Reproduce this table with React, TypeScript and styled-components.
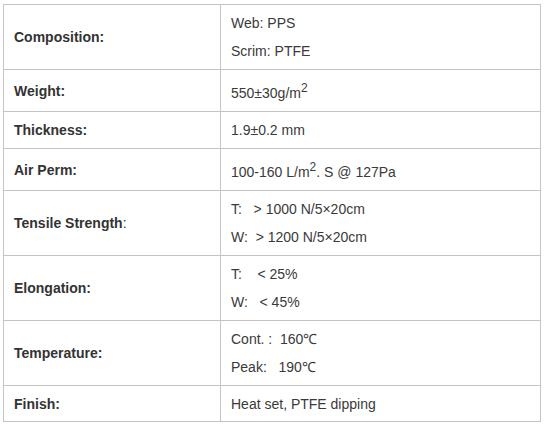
import React from "react";
import styled, { createGlobalStyle } from "styled-components";

const Global = createGlobalStyle`
  html, body { margin: 0; padding: 0; background: #fff; }
  body { font-family: "Liberation Sans", Arial, sans-serif; }
`;

const Wrap = styled.div`
  padding: 4px 4px 0 3px;
`;

const Table = styled.table`
  width: 538px;
  border-collapse: collapse;
  table-layout: fixed;
  font-family: "Liberation Sans", Arial, sans-serif;
  font-size: 14px;
  line-height: 20px;
  color: #333;
`;

const Row = styled.tr<{ $h: number }>`
  height: ${(p) => p.$h}px;
`;

const Label = styled.td`
  width: 196px;
  border: 1px solid #c4c4c4;
  padding: 0 10px;
  font-weight: bold;
  vertical-align: middle;
`;

const Thin = styled.span`
  font-weight: normal;
`;

const Value = styled.td`
  border: 1px solid #c4c4c4;
  padding: 0 10px;
  vertical-align: middle;
  color: #3a3a3a;
`;

const Line = styled.p<{ $sup?: boolean }>`
  margin: 0;
  padding-top: ${(p) => (p.$sup ? 5 : 0)}px;
  & + & {
    margin-top: 8px;
  }
`;

const Sup = styled.sup`
  font-size: 12px;
  line-height: 0;
  vertical-align: 6px;
`;

const sp = (n: number) => "\u00a0".repeat(n);

export default function App() {
  return (
    <>
      <Global />
      <Wrap>
        <Table>
          <tbody>
            <Row $h={65}>
              <Label>Composition:</Label>
              <Value>
                <Line>Web: PPS</Line>
                <Line>Scrim: PTFE</Line>
              </Value>
            </Row>
            <Row $h={42}>
              <Label>Weight:</Label>
              <Value>
                <Line $sup>
                  550±30g/m<Sup>2</Sup>
                </Line>
              </Value>
            </Row>
            <Row $h={37}>
              <Label>Thickness:</Label>
              <Value>
                <Line>1.9±0.2 mm</Line>
              </Value>
            </Row>
            <Row $h={42}>
              <Label>Air Perm:</Label>
              <Value>
                <Line $sup>
                  100-160 L/m<Sup>2</Sup>. S @ 127Pa
                </Line>
              </Value>
            </Row>
            <Row $h={65}>
              <Label>
                Tensile Strength<Thin>:</Thin>
              </Label>
              <Value>
                <Line>T:{sp(3)}&gt; 1000 N/5×20cm</Line>
                <Line>W:{sp(2)}&gt; 1200 N/5×20cm</Line>
              </Value>
            </Row>
            <Row $h={65}>
              <Label>Elongation:</Label>
              <Value>
                <Line>T:{sp(4)}&lt; 25%</Line>
                <Line>W:{sp(3)}&lt; 45%</Line>
              </Value>
            </Row>
            <Row $h={65}>
              <Label>Temperature:</Label>
              <Value>
                <Line>Cont. :{sp(2)}160℃</Line>
                <Line>Peak:{sp(3)}190℃</Line>
              </Value>
            </Row>
            <Row $h={36}>
              <Label>Finish:</Label>
              <Value>
                <Line>Heat set, PTFE dipping</Line>
              </Value>
            </Row>
          </tbody>
        </Table>
      </Wrap>
    </>
  );
}
